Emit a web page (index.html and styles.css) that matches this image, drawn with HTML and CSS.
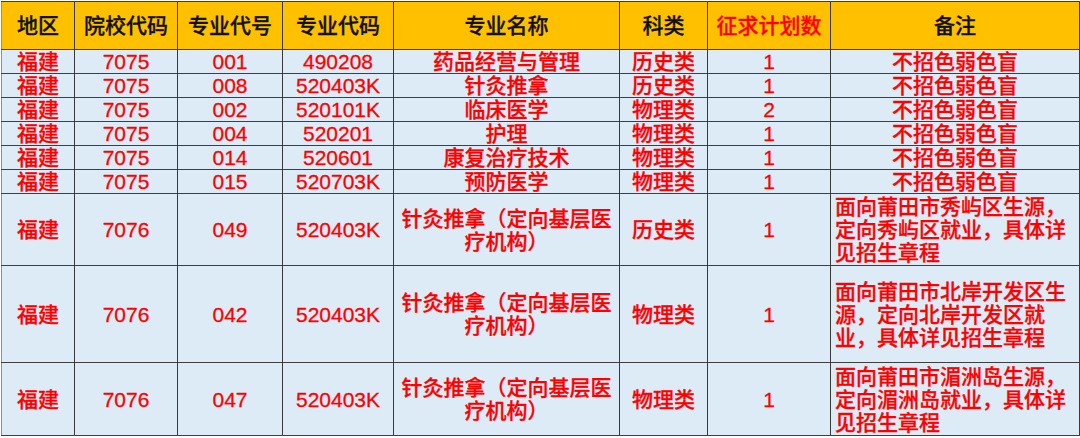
FILE: index.html
```html
<!DOCTYPE html>
<html lang="zh-CN">
<head>
<meta charset="utf-8">
<title>征求计划</title>
<link rel="stylesheet" href="styles.css">
</head>
<body>
<table class="plan">
  <colgroup>
    <col class="c1"><col class="c2"><col class="c3"><col class="c4"><col class="c5"><col class="c6"><col class="c7"><col class="c8">
  </colgroup>
  <thead>
    <tr class="head">
      <th class="g">地区</th><th class="g">院校代码</th><th>专业代号</th><th class="g">专业代码</th><th>专业名称</th><th>科类</th><th class="g red">征求计划数</th><th>备注</th>
    </tr>
  </thead>
  <tbody>
    <tr class="r1"><td class="g">福建</td><td class="g">7075</td><td>001</td><td class="g">490208</td><td>药品经营与管理</td><td>历史类</td><td class="g">1</td><td>不招色弱色盲</td></tr>
    <tr class="r1"><td class="g">福建</td><td class="g">7075</td><td>008</td><td class="g">520403K</td><td>针灸推拿</td><td>历史类</td><td class="g">1</td><td>不招色弱色盲</td></tr>
    <tr class="r1"><td class="g">福建</td><td class="g">7075</td><td>002</td><td class="g">520101K</td><td>临床医学</td><td>物理类</td><td class="g">2</td><td>不招色弱色盲</td></tr>
    <tr class="r1"><td class="g">福建</td><td class="g">7075</td><td>004</td><td class="g">520201</td><td>护理</td><td>物理类</td><td class="g">1</td><td>不招色弱色盲</td></tr>
    <tr class="r1"><td class="g">福建</td><td class="g">7075</td><td>014</td><td class="g">520601</td><td>康复治疗技术</td><td>物理类</td><td class="g">1</td><td>不招色弱色盲</td></tr>
    <tr class="r1"><td class="g">福建</td><td class="g">7075</td><td>015</td><td class="g">520703K</td><td>预防医学</td><td>物理类</td><td class="g">1</td><td>不招色弱色盲</td></tr>
    <tr class="r7"><td class="g">福建</td><td class="g">7076</td><td>049</td><td class="g">520403K</td><td>针灸推拿（定向基层医疗机构）</td><td>历史类</td><td class="g">1</td><td class="note">面向莆田市秀屿区生源，定向秀屿区就业，具体详见招生章程</td></tr>
    <tr class="r8"><td class="g">福建</td><td class="g">7076</td><td>042</td><td class="g">520403K</td><td>针灸推拿（定向基层医疗机构）</td><td>物理类</td><td class="g">1</td><td class="note">面向莆田市北岸开发区生源，定向北岸开发区就业，具体详见招生章程</td></tr>
    <tr class="r9"><td class="g">福建</td><td class="g">7076</td><td>047</td><td class="g">520403K</td><td>针灸推拿（定向基层医疗机构）</td><td>物理类</td><td class="g">1</td><td class="note">面向莆田市湄洲岛生源，定向湄洲岛就业，具体详见招生章程</td></tr>
  </tbody>
</table>
</body>
</html>
```

FILE: styles.css
```css
html, body {
  margin: 0;
  padding: 0;
  background: #ffffff;
}
body {
  padding: 1px 0 0 1px;
}
.plan {
  table-layout: fixed;
  border-collapse: collapse;
  width: 1078px;
  font-family: "Liberation Sans", "Noto Sans CJK SC", sans-serif;
  font-size: 21px;
  font-weight: 500;
  line-height: 23px;
  color: #ff0000;
  -webkit-text-stroke: 0.3px currentColor;
}
.c1 { width: 73px; }
.c2 { width: 103px; }
.c3 { width: 105px; }
.c4 { width: 111px; }
.c5 { width: 226px; }
.c6 { width: 88px; }
.c7 { width: 123px; }
.c8 { width: 249px; }

.plan th, .plan td {
  padding: 0;
  text-align: center;
  vertical-align: middle;
  border-top: 1px solid #3f3f3f;
  border-bottom: 1px solid #3f3f3f;
  border-left: 1px solid #3a3a3a;
  border-right: 1px solid #3a3a3a;
  overflow: hidden;
}
.plan th.g, .plan td.g {
  border-left-color: #8a9098;
}
.plan th:first-child, .plan td:first-child {
  border-left-color: #8a9098;
}
.plan th {
  background: #ffc000;
  color: #111111;
  font-weight: 500;
  height: 47px;
}
.plan th.red {
  color: #ff0000;
}
.plan td {
  background: #ddebf7;
}
.r1 td { height: 23px; }
.r7 td { height: 71px; }
.r8 td { height: 96px; }
.r9 td { height: 72px; }
.plan td.note {
  text-align: left;
  padding-left: 4px;
}
```
